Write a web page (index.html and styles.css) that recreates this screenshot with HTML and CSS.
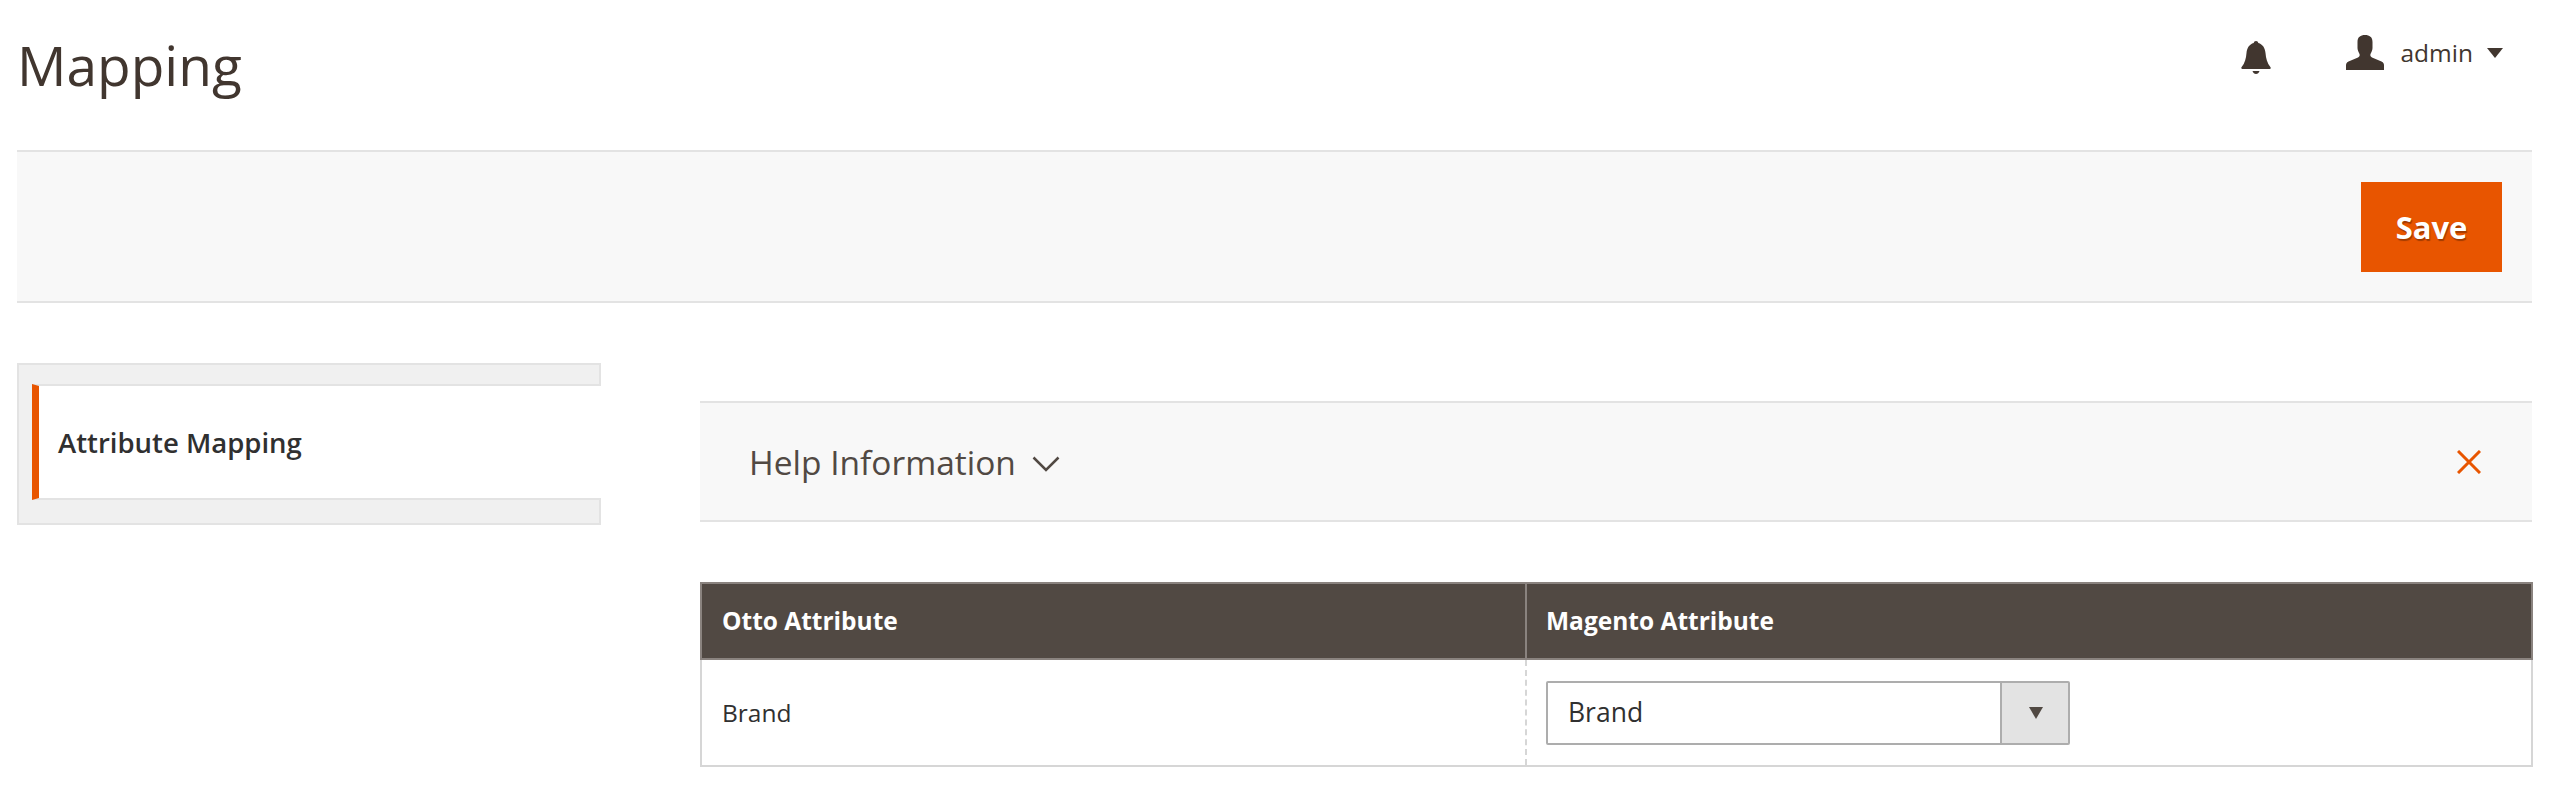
FILE: index.html
```html
<!DOCTYPE html>
<html lang="en">
<head>
  <meta charset="UTF-8" />
  <title>Mapping</title>
  <link rel="stylesheet" href="styles.css">
</head>
<body>
  <div class="page">
    <header class="top">
      <h1>Mapping</h1>
      <div class="top-actions">
        <svg class="bell" viewBox="0 0 30 33"><path d="M15 0c1.300 0 2.100.8 2.300 2.100C21.800 3.400 24 7 24.500 12c.5 5.500 1.500 10 5 14.300.6.800.2 1.700-.8 1.700H1.300c-1 0-1.400-.9-.8-1.700C4 22 5 17.500 5.500 12 6 7 8.200 3.400 12.700 2.100 12.900.8 13.700 0 15 0z"/><path d="M11.500 30h7c-.5 2-2 3-3.500 3s-3-1-3.500-3z"/></svg>
        <div class="user">
          <svg class="user-icon" viewBox="0 0 38 35"><path d="M19 0c4.500 0 7.500 2 7.500 7v6c0 2-1 4-2 6-.5 1.500 0 2.500 1.500 3.500l9.500 4c2 1 2.500 2 2.500 4V35H0v-4.500c0-2 .5-3 2.500-4l9.500-4c1.500-1 2-2 1.500-3.500-1-2-2-4-2-6V7c0-5 3-7 7.500-7z"/></svg>
          <span class="user-name">admin</span>
          <span class="caret"></span>
        </div>
      </div>
    </header>

    <div class="action-bar">
      <button class="save">Save</button>
    </div>

    <div class="columns">
      <aside class="side">
        <div class="side-item">Attribute Mapping</div>
      </aside>

      <main class="content">
        <div class="help">
          <div class="help-title">
            Help Information
            <svg class="chevron" viewBox="0 0 28 16"><path d="M1.500 1.500 14 14 26.500 1.500"/></svg>
          </div>
          <svg class="close" viewBox="0 0 24 24"><path d="M1 1l22 22M23 1 1 23"/></svg>
        </div>

        <table class="map-table">
          <thead>
            <tr>
              <th class="col-otto">Otto Attribute</th>
              <th>Magento Attribute</th>
            </tr>
          </thead>
          <tbody>
            <tr>
              <td class="col-otto">Brand</td>
              <td class="col-magento">
                <div class="select">
                  <span class="select-value">Brand</span>
                  <span class="select-btn"><span class="select-arrow"></span></span>
                </div>
              </td>
            </tr>
          </tbody>
        </table>
      </main>
    </div>
  </div>
</body>
</html>
```

FILE: styles.css
```css
body {
  margin: 0;
  background: #fff;
  font-family: "Open Sans", sans-serif;
  color: #41362f;
}

.page {
  padding: 0 27px 0 17px;
}

.top {
  height: 150px;
  display: flex;
  justify-content: space-between;
}

h1 {
  margin: 25px 0 0;
  font-size: 55px;
  line-height: 80px;
  font-weight: 400;
}

.top-actions {
  display: flex;
  align-items: flex-start;
  padding-top: 35px;
  margin-right: 30px;
}

.bell {
  width: 30px;
  height: 33px;
  margin-top: 6px;
  fill: #41362f;
}

.user {
  display: flex;
  align-items: center;
  margin-left: 75px;
}

.user-icon {
  width: 38px;
  height: 35px;
  fill: #41362f;
}

.user-name {
  margin-left: 16.500px;
  font-size: 24.500px;
  line-height: 35px;
  color: #41362f;
}

.caret {
  margin-left: 14px;
  border-top: 10px solid #41362f;
  border-left: 8px solid transparent;
  border-right: 8px solid transparent;
}

.action-bar {
  height: 153px;
  box-sizing: border-box;
  margin-right: 1px;
  background: #f8f8f8;
  border-top: 2px solid #e3e3e3;
  border-bottom: 2px solid #e3e3e3;
  display: flex;
  justify-content: flex-end;
  align-items: center;
  padding-right: 30px;
}

.save {
  width: 141px;
  height: 90px;
  margin-top: 1px;
  border: none;
  background: #e85500;
  color: #fff;
  font-family: "Open Sans", sans-serif;
  font-size: 31px;
  font-weight: 700;
  text-shadow: 1px 2px 1px rgba(0, 0, 0, 0.3);
}

.columns {
  display: flex;
  align-items: flex-start;
}

.side {
  flex: none;
  width: 584px;
  box-sizing: border-box;
  margin-top: 60px;
  padding: 19px 0 23px;
  background: #f0f0f0;
  border: 2px solid #e3e3e3;
}

.side-item {
  height: 116px;
  margin-left: 13px;
  margin-right: -2px;
  box-sizing: border-box;
  background: #fff;
  border-left: 7px solid #e85500;
  border-top: 2px solid #e3e3e3;
  border-bottom: 2px solid #e3e3e3;
  padding-left: 19px;
  display: flex;
  align-items: center;
  font-size: 27.500px;
  font-weight: 600;
  color: #303030;
}

.content {
  flex: 1;
  margin-left: 99px;
  margin-top: 98px;
}

.help {
  height: 121px;
  box-sizing: border-box;
  margin-right: 1px;
  background: #f8f8f8;
  border-top: 2px solid #e3e3e3;
  border-bottom: 2px solid #e3e3e3;
  display: flex;
  justify-content: space-between;
  align-items: center;
  padding: 0 51px 0 49px;
}

.help-title {
  display: flex;
  align-items: center;
  font-size: 33.500px;
  line-height: 46px;
  padding-top: 1px;
  color: #514943;
}

.chevron {
  width: 28px;
  height: 16px;
  margin-left: 16px;
  margin-top: 4px;
  fill: none;
  stroke: #514943;
  stroke-width: 2.500;
}

.close {
  width: 24px;
  height: 24px;
  fill: none;
  stroke: #e85500;
  stroke-width: 3;
}

.map-table {
  width: 100%;
  margin-top: 60px;
  border-collapse: collapse;
  font-size: 24.500px;
}

.map-table th {
  height: 76px;
  box-sizing: border-box;
  padding: 0 19px 2px;
  background: #514943;
  border: 2px solid #8a837f;
  color: #fff;
  font-weight: 700;
  text-align: left;
}

.map-table td {
  height: 107px;
  box-sizing: border-box;
  padding: 0 19px;
  border: 2px solid #d6d6d6;
  color: #303030;
}

.map-table .col-otto {
  width: 825px;
  padding-left: 20px;
}

.map-table td.col-otto {
  border-right: 2px dashed #d6d6d6;
}

.map-table td.col-magento {
  border-left: 2px dashed #d6d6d6;
}

.select {
  width: 524px;
  height: 64px;
  box-sizing: border-box;
  border: 2px solid #adadad;
  border-radius: 2px;
  display: flex;
  align-items: center;
  justify-content: space-between;
}

.select-value {
  padding: 0 0 1px 20px;
  font-size: 26.500px;
  color: #303030;
}

.select-btn {
  width: 68px;
  height: 100%;
  box-sizing: border-box;
  padding-left: 2px;
  background: #e3e3e3;
  border-left: 2px solid #adadad;
  display: flex;
  align-items: center;
  justify-content: center;
}

.select-arrow {
  border-top: 12px solid #514943;
  border-left: 7.500px solid transparent;
  border-right: 7.500px solid transparent;
}
```
